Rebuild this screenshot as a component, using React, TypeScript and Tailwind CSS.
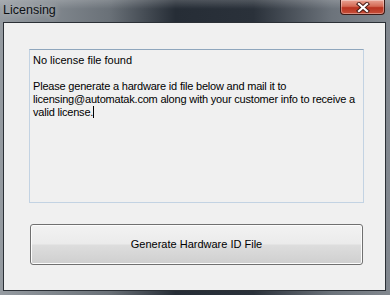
export default function App() {
    return (
        <div
            className="w-[390px] h-[295px] flex flex-col overflow-hidden"
            style={{ fontFamily: '"Liberation Sans", Arial, sans-serif' }}
        >
            <div className="flex flex-col h-[295px] bg-[linear-gradient(90deg,#959ba1_0%,#6a7178_28%,#262d36_45%,#2a313a_65%,#6c737b_85%,#82888f_100%)]">
                {/* title bar */}
                <div className="h-[22px] flex items-start justify-between relative">
                    <div className="absolute inset-x-0 top-0 h-[9px] bg-[linear-gradient(180deg,rgba(255,255,255,0.18),rgba(255,255,255,0))]" />
                    <span className="relative pl-[3px] pt-[3px] text-[12.5px] leading-[14px] text-[#0c1014] [text-shadow:0_0_6px_rgba(255,255,255,0.6)]">
                        Licensing
                    </span>
                    <div className="relative mr-[5px] w-[45px] h-[15px] rounded-b-[4px] border border-t-0 border-[#3c1a16] bg-[linear-gradient(180deg,#e9a394_0%,#d46a55_45%,#b8321f_55%,#c8503a_100%)] flex items-center justify-center shadow-[inset_0_0_0_1px_rgba(255,255,255,0.35)]">
                        <svg width="14" height="11" viewBox="0 0 14 11">
                            <path d="M3 2 L11 9 M11 2 L3 9" stroke="#4a1d18" strokeWidth="4.2" strokeLinecap="square" />
                            <path d="M3 2 L11 9 M11 2 L3 9" stroke="#ffffff" strokeWidth="2.2" strokeLinecap="square" />
                        </svg>
                    </div>
                </div>
                {/* client area */}
                <div className="ml-[3px] w-[383px] h-[269px] border border-[#2b3036] bg-[#f0f0f0] flex flex-col">
                    <div className="ml-[25px] mt-[26px] w-[335px] h-[154px] border border-[#c3d3e3] border-t-[#8fa6bd] bg-[#f0f0f0] px-[3px] pt-[4px] text-[11px] leading-[13px] text-black">
                        <p>No license file found</p>
                        <p>&nbsp;</p>
                        <p className="tracking-[-0.2px]">
                            Please generate a hardware id file below and mail it to
                            licensing@automatak.com along with your customer info to receive a
                            valid license.<span className="inline-block w-[1px] h-[12px] bg-black align-[-2px]" />
                        </p>
                    </div>
                    <button className="ml-[26px] mt-[21px] w-[333px] h-[41px] rounded-[3px] border border-[#707070] shadow-[inset_0_0_0_1px_#fcfcfc] bg-[linear-gradient(180deg,#f2f2f2_0%,#ebebeb_48%,#dddddd_52%,#cfcfcf_100%)] text-[11px] text-black flex items-center justify-center">
                        Generate Hardware ID File
                    </button>
                </div>
            </div>
        </div>
    );
}
